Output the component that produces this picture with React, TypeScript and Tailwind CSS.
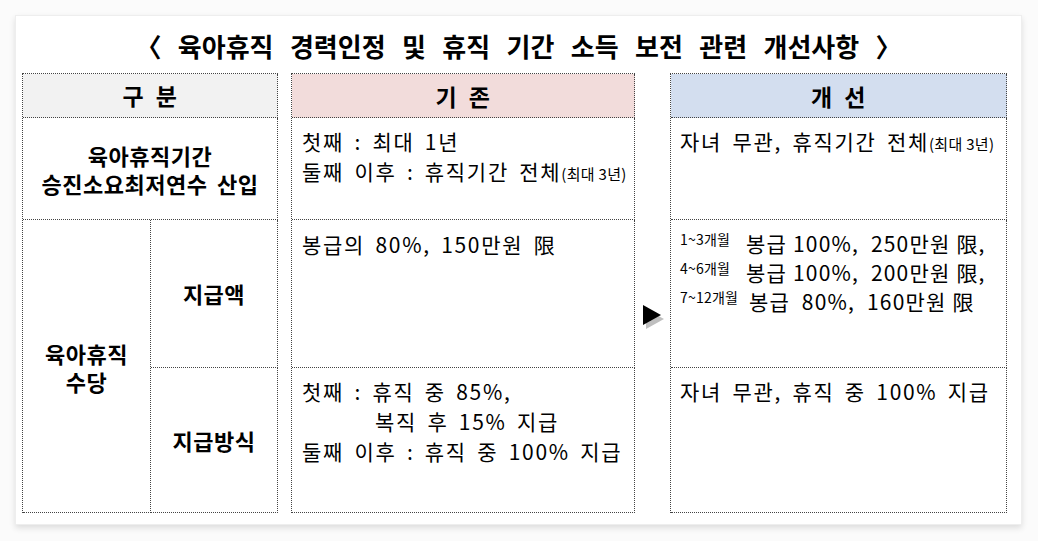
import React from 'react';

const font = { fontFamily: '"Noto Sans CJK KR", "Noto Sans", sans-serif' };

function Arrow() {
  return (
    <svg width="24" height="26" viewBox="0 0 24 26">
      <polygon points="4,5 22,15 4,25" fill="#bfbfbf" />
      <polygon points="1,1 19,11 1,21" fill="#000" />
    </svg>
  );
}

function App() {
  const cell = 'border-r border-b border-dotted border-[#444]';
  return (
    <div className="w-[1038px] h-[541px] bg-[#fbfbfb] pt-[15px] pl-[15px] text-black" style={font}>
      <div className="w-[1007px] h-[510px] bg-white shadow-[0_3px_6px_rgba(0,0,0,0.12)] border border-[#eee]">
        <h1 className="h-[57px] flex items-center justify-center pt-[1px] text-[26px] font-bold [word-spacing:10.5px] whitespace-nowrap">
          〈 육아휴직 경력인정 및 휴직 기간 소득 보전 관련 개선사항 〉
        </h1>
        <div className="flex pl-[6px]">
          {/* 구분 */}
          <div className="w-[256px] grid grid-cols-[128px_127px] grid-rows-[44px_102px_148px_145px] border-t border-l border-dotted border-[#444] text-[22px] font-bold tracking-[0.5px]">
            <div className={`${cell} col-span-2 bg-[#f2f2f2] flex items-center justify-center text-[23px] [word-spacing:6px]`}>
              구 분
            </div>
            <div className={`${cell} col-span-2 flex flex-col items-center justify-center leading-[28px]`}>
              <span>육아휴직기간</span>
              <span className="[word-spacing:4px]">승진소요최저연수 산입</span>
            </div>
            <div className={`${cell} row-span-2 flex flex-col items-center justify-center leading-[28px] pt-[2px]`}>
              <span>육아휴직</span>
              <span>수당</span>
            </div>
            <div className={`${cell} flex items-center justify-center`}>지급액</div>
            <div className={`${cell} flex items-center justify-center`}>지급방식</div>
          </div>

          {/* 기존 */}
          <div className="ml-[13px] w-[344px] grid grid-rows-[44px_102px_148px_145px] border-t border-l border-dotted border-[#444] text-[21px] leading-[30px] tracking-[1.7px] [word-spacing:4px] whitespace-nowrap">
            <div className={`${cell} bg-[#f2dcdb] flex items-center justify-center text-[23px] font-bold tracking-[0.5px] [word-spacing:6px]`}>
              기 존
            </div>
            <div className={`${cell} pl-[10px] pt-[8px]`}>
              <div>첫째 : 최대 1년</div>
              <div>
                둘째 이후 : 휴직기간 전체<span className="text-[15px] tracking-[0.3px] [word-spacing:0px]">(최대 3년)</span>
              </div>
            </div>
            <div className={`${cell} pl-[10px] pt-[9px]`}>봉급의 80%, 150만원 限</div>
            <div className={`${cell} pl-[10px] pt-[8px]`}>
              <div>첫째 : 휴직 중 85%,</div>
              <div className="pl-[73px]">복직 후 15% 지급</div>
              <div>둘째 이후 : 휴직 중 100% 지급</div>
            </div>
          </div>

          <div className="w-[35px] flex justify-center pt-[231px] pl-[2px]">
            <div className="h-[26px]">
              <Arrow />
            </div>
          </div>

          {/* 개선 */}
          <div className="w-[337px] grid grid-rows-[44px_102px_148px_145px] border-t border-l border-dotted border-[#444] text-[21px] leading-[30px] tracking-[1.7px] [word-spacing:4px] whitespace-nowrap">
            <div className={`${cell} bg-[#d3deef] flex items-center justify-center text-[23px] font-bold tracking-[0.5px] [word-spacing:6px]`}>
              개 선
            </div>
            <div className={`${cell} pl-[9px] pt-[8px]`}>
              자녀 무관, 휴직기간 전체<span className="text-[15px] tracking-[0.3px] [word-spacing:0px]">(최대 3년)</span>
            </div>
            <div className={`${cell} pl-[9px] pt-[9px] leading-[29px] tracking-[1.2px] [word-spacing:0px]`}>
              <div className="flex items-start">
                <span className="w-[66px] text-[14px] leading-[20px] tracking-[0.2px]">1~3개월</span>
                <span>봉급 100%, &nbsp;250만원 限,</span>
              </div>
              <div className="flex items-start">
                <span className="w-[66px] text-[14px] leading-[20px] tracking-[0.2px]">4~6개월</span>
                <span>봉급 100%, &nbsp;200만원 限,</span>
              </div>
              <div className="flex items-start">
                <span className="w-[69px] text-[14px] leading-[20px] tracking-[0.2px]">7~12개월</span>
                <span>봉급 &nbsp;80%, &nbsp;160만원 限</span>
              </div>
            </div>
            <div className={`${cell} pl-[9px] pt-[8px]`}>자녀 무관, 휴직 중 100% 지급</div>
          </div>
        </div>
      </div>
    </div>
  );
}

export default App;
